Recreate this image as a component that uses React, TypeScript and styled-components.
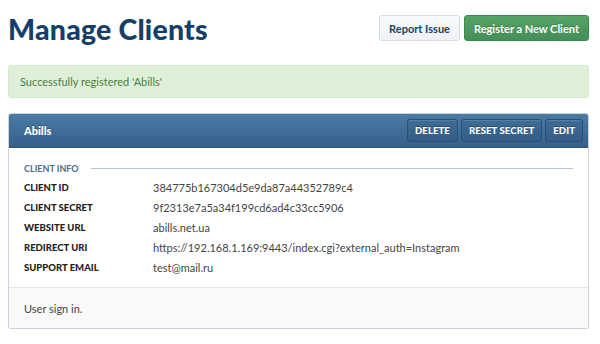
import React from "react";
import styled, { createGlobalStyle } from "styled-components";

const GlobalStyle = createGlobalStyle`
  body {
    margin: 0;
    background: #fff;
    font-family: Lato, "Open Sans", sans-serif;
  }
`;

const Page = styled.div`
  width: 581px;
  padding: 0 0 0 8px;
`;

const TopBar = styled.div`
  display: flex;
  align-items: center;
  justify-content: space-between;
  height: 56px;
`;

const Title = styled.h1`
  margin: 0;
  font-size: 28.5px;
  font-weight: 900;
  color: #153e68;
  letter-spacing: 0.2px;
  padding-top: 2px;
`;

const Actions = styled.div`
  display: flex;
  gap: 4px;
`;

type BtnProps = { $variant: "default" | "success" };

const Button = styled.button<BtnProps>`
  height: 26px;
  padding: 0 9px;
  border-radius: 3px;
  font-family: Lato, sans-serif;
  font-size: 11px;
  font-weight: 700;
  cursor: pointer;
  border: 1px solid ${(p) => (p.$variant === "success" ? "#3d8a4f" : "#d4dbe3")};
  color: ${(p) => (p.$variant === "success" ? "#fff" : "#27405b")};
  background: ${(p) =>
    p.$variant === "success"
      ? "linear-gradient(#55a468, #448e57)"
      : "linear-gradient(#f8fafc, #eef2f6)"};
  text-shadow: ${(p) => (p.$variant === "success" ? "0 -1px 0 rgba(0,0,0,0.2)" : "none")};
`;

const Alert = styled.div`
  margin-top: 9px;
  height: 33px;
  box-sizing: border-box;
  display: flex;
  align-items: center;
  padding: 0 11px;
  background: #dff0d8;
  border: 1px solid #d3e8c9;
  border-radius: 3px;
  color: #4a7d46;
  font-size: 11px;
`;

const Panel = styled.div`
  margin-top: 15px;
  border: 1px solid #c9d3dd;
  border-radius: 3px;
  overflow: hidden;
  box-shadow: 0 1px 1px rgba(0, 0, 0, 0.05);
`;

const PanelHeader = styled.div`
  height: 33px;
  display: flex;
  align-items: center;
  justify-content: space-between;
  padding: 0 5px 0 15px;
  background: linear-gradient(#4b7ba5, #34608a);
  border-bottom: 1px solid #2e5678;
`;

const PanelTitle = styled.span`
  color: #fff;
  font-size: 11px;
  font-weight: 900;
  text-shadow: 0 -1px 0 rgba(0, 0, 0, 0.3);
`;

const HeaderActions = styled.div`
  display: flex;
  gap: 3px;
`;

const HeaderButton = styled.button`
  height: 23px;
  padding: 0 7px;
  border-radius: 3px;
  border: 1px solid #2a4f70;
  background: linear-gradient(#3f6d96, #335d84);
  box-shadow: inset 0 1px 0 rgba(255, 255, 255, 0.12);
  color: #fff;
  font-family: Lato, sans-serif;
  font-size: 9.5px;
  font-weight: 900;
  letter-spacing: 0.1px;
  text-shadow: 0 -1px 0 rgba(0, 0, 0, 0.3);
`;

const PanelBody = styled.div`
  padding: 15px 15px 10px 15px;
  background: #fff;
`;

const SectionTitle = styled.div`
  display: flex;
  align-items: center;
  gap: 12px;
  color: #4d6c8c;
  font-size: 9px;
  font-weight: 700;
  margin-bottom: 3px;
  &::after {
    content: "";
    flex: 1;
    height: 1px;
    background: #b7c6d6;
  }
`;

const InfoGrid = styled.div`
  display: grid;
  grid-template-columns: 129px 1fr;
  grid-auto-rows: 20px;
  align-items: center;
`;

const Label = styled.div`
  font-size: 9.5px;
  font-weight: 900;
  color: #222;
`;

const Value = styled.div`
  font-size: 11px;
  color: #444;
`;

const PanelFooter = styled.div`
  height: 40px;
  display: flex;
  align-items: center;
  padding: 0 15px;
  background: #f9f9f9;
  border-top: 1px solid #e2e6ea;
  color: #444;
  font-size: 11px;
`;

const rows: [string, string][] = [
  ["CLIENT ID", "384775b167304d5e9da87a44352789c4"],
  ["CLIENT SECRET", "9f2313e7a5a34f199cd6ad4c33cc5906"],
  ["WEBSITE URL", "abills.net.ua"],
  ["REDIRECT URI", "https://192.168.1.169:9443/index.cgi?external_auth=Instagram"],
  ["SUPPORT EMAIL", "test@mail.ru"],
];

export default function App() {
  return (
    <>
      <GlobalStyle />
      <Page>
        <TopBar>
          <Title>Manage Clients</Title>
          <Actions>
            <Button $variant="default">Report Issue</Button>
            <Button $variant="success">Register a New Client</Button>
          </Actions>
        </TopBar>
        <Alert>Successfully registered 'Abills'</Alert>
        <Panel>
          <PanelHeader>
            <PanelTitle>Abills</PanelTitle>
            <HeaderActions>
              <HeaderButton>DELETE</HeaderButton>
              <HeaderButton>RESET SECRET</HeaderButton>
              <HeaderButton>EDIT</HeaderButton>
            </HeaderActions>
          </PanelHeader>
          <PanelBody>
            <SectionTitle>CLIENT INFO</SectionTitle>
            <InfoGrid>
              {rows.map(([label, value]) => (
                <React.Fragment key={label}>
                  <Label>{label}</Label>
                  <Value>{value}</Value>
                </React.Fragment>
              ))}
            </InfoGrid>
          </PanelBody>
          <PanelFooter>User sign in.</PanelFooter>
        </Panel>
      </Page>
    </>
  );
}
